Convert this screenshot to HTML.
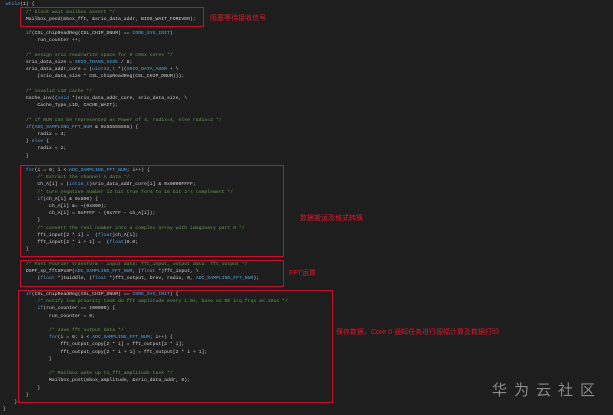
<!DOCTYPE html>
<html><head><meta charset="utf-8"><style>
html,body{margin:0;padding:0;background:#1e1e1e;width:613px;height:415px;overflow:hidden;position:relative}
.code{position:absolute;left:0;font-family:"Liberation Mono",monospace;font-size:4.8px;line-height:7.2px;color:#d4d4d4;white-space:pre}
.c{color:#6a9955}.k{color:#569cd6}.m{color:#4fa8e0}
.box{position:absolute;border:1px solid #c8102e;box-sizing:border-box}
.lbl{position:absolute;color:#d8192e;font-family:"Liberation Sans","Noto Sans CJK SC",sans-serif;font-size:7px;line-height:8px;white-space:nowrap}
.wm{position:absolute;left:492px;top:381px;color:#8a8a8a;font-family:"Noto Sans CJK SC",sans-serif;font-size:15px;letter-spacing:7px;line-height:17px;white-space:nowrap}
</style></head><body>
<div class="code" style="top:1.4px">  <span class="k">while</span>(1) {
         <span class="c">/* block wait mailbox assert */</span>
         Mailbox_pend(mbox_fft, &amp;srio_data_addr, BIOS_WAIT_FOREVER);

         <span class="k">if</span>(CSL_chipReadReg(CSL_CHIP_DNUM) == <span class="m">CORE_SYS_INIT</span>)
             run_counter ++;

         <span class="c">/* assign srio read/write space for 8 c66x cores */</span>
         srio_data_size = <span class="m">SRIO_TRANS_SIZE</span> / 8;
         srio_data_addr_core = (<span class="k">uint32_t</span> *)(<span class="m">SRIO_DATA_ADDR</span> + \
             (srio_data_size * CSL_chipReadReg(CSL_CHIP_DNUM)));

         <span class="c">/* invalid L1D cache */</span>
         Cache_inv((<span class="k">void</span> *)srio_data_addr_core, srio_data_size, \
             Cache_Type_L1D, CACHE_WAIT);

         <span class="c">/* if NUM can be represented as Power of 4, radix=4, else radix=2 */</span>
         <span class="k">if</span>(<span class="m">ADC_SAMPLING_FFT_NUM</span> &amp; 0x55555555) {
             radix = 4;
         } <span class="k">else</span> {
             radix = 2;
         }

         <span class="k">for</span>(i = 0; i &lt; <span class="m">ADC_SAMPLING_FFT_NUM</span>; i++) {
             <span class="c">/* Extract the channel A data */</span>
             ch_A[i] = (<span class="k">int16_t</span>)srio_data_addr_core[i] &amp; 0x0000FFFF;
             <span class="c">/* turn negative number 12 bit true form to 16 bit 2's complement */</span>
             <span class="k">if</span>(ch_A[i] &amp; 0x800) {
                 ch_A[i] &amp;= ~(0x800);
                 ch_A[i] = 0xFFFF - (0x7FF - ch_A[i]);
             }
             <span class="c">/* convert the real number into a complex array with imaginary part 0 */</span>
             fft_input[2 * i] =  (<span class="k">float</span>)ch_A[i];
             fft_input[2 * i + 1] =  (<span class="k">float</span>)0.0;
         }

         <span class="c">/* Fast Fourier transform - input data: fft_input, output data: fft_output */</span>
         DSPF_sp_fftSPxSP(<span class="m">ADC_SAMPLING_FFT_NUM</span>, (<span class="k">float</span> *)fft_input, \
             (<span class="k">float</span> *)twiddle, (<span class="k">float</span> *)fft_output, brev, radix, 0, <span class="m">ADC_SAMPLING_FFT_NUM</span>);</div>
<div class="code" style="top:291px">         <span class="k">if</span>(CSL_chipReadReg(CSL_CHIP_DNUM) == <span class="m">CORE_SYS_INIT</span>) {
             <span class="c">/* notify low priority task do fft amplitude every 1.0s, base on DE irq frqs as 10us */</span>
             <span class="k">if</span>(run_counter == 100000) {
                 run_counter = 0;

                 <span class="c">/* save fft output data */</span>
                 <span class="k">for</span>(i = 0; i &lt; <span class="m">ADC_SAMPLING_FFT_NUM</span>; i++) {
                     fft_output_copy[2 * i] = fft_output[2 * i];
                     fft_output_copy[2 * i + 1] = fft_output[2 * i + 1];
                 }

                 <span class="c">/* Mailbox wake up t1_fft_amplitude task */</span>
                 Mailbox_post(mbox_amplitude, &amp;srio_data_addr, 0);
             }
         }
     }
 }</div>
<div class="box" style="left:20px;top:7px;width:184px;height:20px"></div>
<div class="box" style="left:20px;top:165px;width:264px;height:92px"></div>
<div class="box" style="left:20px;top:260px;width:264px;height:27px"></div>
<div class="box" style="left:18px;top:290px;width:315px;height:113px"></div>
<div class="lbl" style="left:210px;top:15px">阻塞等待接收信号</div>
<div class="lbl" style="left:300px;top:215px">数据搬运及格式转换</div>
<div class="lbl" style="left:289px;top:270px">FFT运算</div>
<div class="lbl" style="left:336px;top:329px">保存数据，Core 0 通知任务进行振幅计算及数据打印</div>
<div class="wm">华为云社区</div>
</body></html>
